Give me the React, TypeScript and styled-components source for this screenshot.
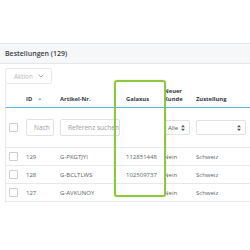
import React from 'react'
import styled, { createGlobalStyle } from 'styled-components'

const GlobalStyle = createGlobalStyle`
    html, body {
        margin: 0;
        padding: 0;
        background: #ffffff;
        font-family: "Open Sans", "Liberation Sans", sans-serif;
        overflow: hidden;
    }
`

type Order = {
    id: number
    article: string
    galaxus?: string
    newCustomer: string
    delivery: string
}

const orders: Order[] = [
    { id: 129, article: 'G-PKGTJYI', galaxus: '112851448', newCustomer: 'Nein', delivery: 'Schweiz' },
    { id: 128, article: 'G-BCLTLWS', galaxus: '102509737', newCustomer: 'Nein', delivery: 'Schweiz' },
    { id: 127, article: 'G-AVKUNOY', newCustomer: 'Nein', delivery: 'Schweiz' }
]

const SelectArrows = () => (
    <svg width="4" height="6" viewBox="0 0 4 6">
        <path d="M2 0 L4 2.2 L0 2.2 Z M2 6 L4 3.8 L0 3.8 Z" fill="#555" />
    </svg>
)

const Chevron = () => (
    <svg width="6" height="4" viewBox="0 0 6 4">
        <path d="M0.6 0.6 L3 3 L5.4 0.6" fill="none" stroke="#aaa" strokeWidth="1" />
    </svg>
)

const App = () => {
    return (
        <>
            <GlobalStyle />
            <Page>
                <Panel>
                    <PanelHeading>Bestellungen (129)</PanelHeading>
                    <PanelBody>
                        <ActionButton>
                            Aktion <Chevron />
                        </ActionButton>
                        <TableWrap>
                            <Table>
                                <colgroup>
                                    <col style={{ width: 17 }} />
                                    <col style={{ width: 34 }} />
                                    <col style={{ width: 66 }} />
                                    <col style={{ width: 38 }} />
                                    <col style={{ width: 32 }} />
                                    <col />
                                </colgroup>
                                <thead>
                                    <tr>
                                        <HeadCell />
                                        <HeadCell>
                                            ID <SortArrow>▲</SortArrow>
                                        </HeadCell>
                                        <HeadCell>Artikel-Nr.</HeadCell>
                                        <HeadCell>Galaxus</HeadCell>
                                        <HeadCell>
                                            Neuer
                                            <br />
                                            Kunde
                                        </HeadCell>
                                        <HeadCell>Zustellung</HeadCell>
                                    </tr>
                                    <FilterRow>
                                        <FilterCell>
                                            <CheckBox />
                                        </FilterCell>
                                        <FilterCell>
                                            <TextInput $tight>Nach</TextInput>
                                        </FilterCell>
                                        <FilterCell>
                                            <TextInput>Referenz suchen</TextInput>
                                        </FilterCell>
                                        <FilterCell />
                                        <FilterCell>
                                            <Select $width={26}>
                                                Alle <SelectArrows />
                                            </Select>
                                        </FilterCell>
                                        <FilterCell>
                                            <Select $width={50}>
                                                <span />
                                                <SelectArrows />
                                            </Select>
                                        </FilterCell>
                                    </FilterRow>
                                </thead>
                                <tbody>
                                    {orders.map(o => (
                                        <Row key={o.id}>
                                            <Cell>
                                                <CheckBox />
                                            </Cell>
                                            <Cell>{o.id}</Cell>
                                            <Cell>{o.article}</Cell>
                                            <Cell>{o.galaxus ?? ''}</Cell>
                                            <Cell>{o.newCustomer}</Cell>
                                            <Cell>{o.delivery}</Cell>
                                        </Row>
                                    ))}
                                </tbody>
                            </Table>
                        </TableWrap>
                    </PanelBody>
                </Panel>
                <Highlight />
            </Page>
        </>
    )
}

const Page = styled.div`
    position: relative;
    width: 250px;
    height: 250px;
    padding-top: 43px;
    box-sizing: border-box;
    overflow: hidden;
`

const Panel = styled.div`
    border-top: 1px solid #e4e6e8;
`

const PanelHeading = styled.div`
    height: 19px;
    line-height: 19px;
    padding-left: 5px;
    background: #f6f7f8;
    border-bottom: 1px solid #e4e6e8;
    font-size: 7px;
    font-weight: 600;
    color: #3a3f44;
`

const PanelBody = styled.div`
    padding: 4px 0 0 5px;
`

const ActionButton = styled.div`
    display: flex;
    align-items: center;
    justify-content: space-between;
    box-sizing: border-box;
    width: 47px;
    height: 16px;
    padding: 0 7px 0 8px;
    border: 1px solid #e8e9eb;
    border-radius: 2px;
    font-size: 6.3px;
    color: #b5b8bb;
`

const TableWrap = styled.div`
    border-left: 1px solid #e4e6e8;
`

const Table = styled.table`
    border-collapse: collapse;
    table-layout: fixed;
    width: 100%;
    font-size: 6px;
    color: #5a5f63;
`

const HeadCell = styled.th`
    height: 19px;
    padding: 0 3px 4px 3px;
    vertical-align: bottom;
    text-align: left;
    font-weight: 700;
    font-size: 5.8px;
    line-height: 8px;
    color: #33383c;
    border-bottom: 1px solid #4fb7d9;
    white-space: nowrap;
`

const SortArrow = styled.span`
    margin-left: 4px;
    font-size: 4px;
    color: #4fb7d9;
    vertical-align: 1px;
`

const FilterRow = styled.tr`
    border-bottom: 1px solid #e6e8ea;
`

const FilterCell = styled.td`
    height: 39px;
    padding: 0 3px;
    vertical-align: middle;
`

const TextInput = styled.div<{ $tight?: boolean }>`
    box-sizing: border-box;
    height: 17px;
    line-height: 15px;
    border: 1px solid #dfe1e3;
    border-radius: 2px;
    padding: 0 ${({ $tight }) => ($tight ? '0 0 7px' : '7px')};
    font-size: 6.6px;
    color: #9a9ea2;
    white-space: nowrap;
    overflow: hidden;
`

const Select = styled.div<{ $width: number }>`
    box-sizing: border-box;
    display: flex;
    align-items: center;
    justify-content: space-between;
    width: ${({ $width }) => $width}px;
    height: 15px;
    padding: 0 4px 0 3px;
    border: 1px solid #dfe1e3;
    border-radius: 2px;
    font-size: 6px;
    color: #555a5e;
`

const Row = styled.tr`
    border-bottom: 1px solid #e6e8ea;
`

const Cell = styled.td`
    height: 17px;
    padding: 0 3px;
    vertical-align: middle;
    white-space: nowrap;
`

const CheckBox = styled.div`
    box-sizing: border-box;
    width: 9px;
    height: 9px;
    border: 1px solid #c9ccd0;
    border-radius: 1px;
    background: #fff;
`

const Highlight = styled.div`
    position: absolute;
    left: 114px;
    top: 80px;
    width: 52px;
    height: 117px;
    box-sizing: border-box;
    border: 2px solid #8dc63f;
    border-radius: 3px;
    box-shadow: 0 0 2px rgba(120, 180, 50, 0.35);
    pointer-events: none;
`

export default App
